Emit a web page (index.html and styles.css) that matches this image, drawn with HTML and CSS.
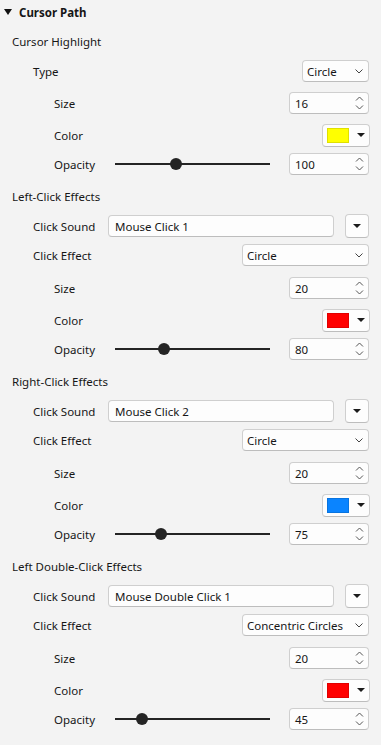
FILE: index.html
```html
<!DOCTYPE html>
<html lang="en">
<head>
  <meta charset="UTF-8">
  <meta name="viewport" content="width=device-width, initial-scale=1.0">
  <title>Cursor Path</title>
  <link rel="stylesheet" href="styles.css">
</head>
<body>
  <div class="panel">
    <div class="title">
      <svg class="caret" width="8" height="6" viewBox="0 0 8 6"><path d="M0 0h8L4 6z" fill="#111"/></svg>
      <span>Cursor Path</span>
    </div>

    <!-- Cursor highlight -->
    <div class="group first">
      <div class="group-head">Cursor Highlight</div>
      <div class="row lvl1">
        <span class="label">Type</span>
        <div class="select select-sm"><span>Circle</span><svg class="chev" width="8" height="5" viewBox="0 0 8 5"><path d="M0.5 0.5L4 4L7.5 0.5" fill="none" stroke="#444" stroke-width="1"/></svg></div>
      </div>
      <div class="row lvl2 sub">
        <span class="label">Size</span>
        <div class="spin"><span>16</span><svg class="arrows" width="9" height="16" viewBox="0 0 9 16"><path d="M1 5.5L4.5 2L8 5.5M1 10.5L4.5 14L8 10.5" fill="none" stroke="#555" stroke-width="1"/></svg></div>
      </div>
      <div class="row lvl2 sub">
        <span class="label">Color</span>
        <div class="color-btn"><span class="swatch" style="background:#ffff00"></span><span class="drop"></span></div>
      </div>
      <div class="row lvl2 opacity">
        <span class="label">Opacity</span>
        <div class="slider"><span class="thumb" style="left:39.2%"></span></div>
        <div class="spin"><span>100</span><svg class="arrows" width="9" height="16" viewBox="0 0 9 16"><path d="M1 5.5L4.5 2L8 5.5M1 10.5L4.5 14L8 10.5" fill="none" stroke="#555" stroke-width="1"/></svg></div>
      </div>
    </div>

    <div class="group">
      <div class="group-head">Left-Click Effects</div>
      <div class="row lvl1">
        <span class="label">Click Sound</span>
        <div class="text-input">Mouse Click 1</div>
        <div class="menu-btn"><span class="drop"></span></div>
      </div>
      <div class="row lvl1 tight">
        <span class="label">Click Effect</span>
        <div class="select select-lg"><span>Circle</span><svg class="chev" width="8" height="5" viewBox="0 0 8 5"><path d="M0.5 0.5L4 4L7.5 0.5" fill="none" stroke="#444" stroke-width="1"/></svg></div>
      </div>
      <div class="row lvl2 sub wide">
        <span class="label">Size</span>
        <div class="spin"><span>20</span><svg class="arrows" width="9" height="16" viewBox="0 0 9 16"><path d="M1 5.5L4.5 2L8 5.5M1 10.5L4.5 14L8 10.5" fill="none" stroke="#555" stroke-width="1"/></svg></div>
      </div>
      <div class="row lvl2 sub">
        <span class="label">Color</span>
        <div class="color-btn"><span class="swatch" style="background:#ff0000"></span><span class="drop"></span></div>
      </div>
      <div class="row lvl2 opacity">
        <span class="label">Opacity</span>
        <div class="slider"><span class="thumb" style="left:31.4%"></span></div>
        <div class="spin"><span>80</span><svg class="arrows" width="9" height="16" viewBox="0 0 9 16"><path d="M1 5.5L4.5 2L8 5.5M1 10.5L4.5 14L8 10.5" fill="none" stroke="#555" stroke-width="1"/></svg></div>
      </div>
    </div>

    <div class="group">
      <div class="group-head">Right-Click Effects</div>
      <div class="row lvl1">
        <span class="label">Click Sound</span>
        <div class="text-input">Mouse Click 2</div>
        <div class="menu-btn"><span class="drop"></span></div>
      </div>
      <div class="row lvl1 tight">
        <span class="label">Click Effect</span>
        <div class="select select-lg"><span>Circle</span><svg class="chev" width="8" height="5" viewBox="0 0 8 5"><path d="M0.5 0.5L4 4L7.5 0.5" fill="none" stroke="#444" stroke-width="1"/></svg></div>
      </div>
      <div class="row lvl2 sub wide">
        <span class="label">Size</span>
        <div class="spin"><span>20</span><svg class="arrows" width="9" height="16" viewBox="0 0 9 16"><path d="M1 5.5L4.5 2L8 5.5M1 10.5L4.5 14L8 10.5" fill="none" stroke="#555" stroke-width="1"/></svg></div>
      </div>
      <div class="row lvl2 sub">
        <span class="label">Color</span>
        <div class="color-btn"><span class="swatch" style="background:#0a84ff"></span><span class="drop"></span></div>
      </div>
      <div class="row lvl2 opacity">
        <span class="label">Opacity</span>
        <div class="slider"><span class="thumb" style="left:29.4%"></span></div>
        <div class="spin"><span>75</span><svg class="arrows" width="9" height="16" viewBox="0 0 9 16"><path d="M1 5.5L4.5 2L8 5.5M1 10.5L4.5 14L8 10.5" fill="none" stroke="#555" stroke-width="1"/></svg></div>
      </div>
    </div>

    <div class="group">
      <div class="group-head">Left Double-Click Effects</div>
      <div class="row lvl1">
        <span class="label">Click Sound</span>
        <div class="text-input">Mouse Double Click 1</div>
        <div class="menu-btn"><span class="drop"></span></div>
      </div>
      <div class="row lvl1 tight">
        <span class="label">Click Effect</span>
        <div class="select select-lg"><span>Concentric Circles</span><svg class="chev" width="8" height="5" viewBox="0 0 8 5"><path d="M0.5 0.5L4 4L7.5 0.5" fill="none" stroke="#444" stroke-width="1"/></svg></div>
      </div>
      <div class="row lvl2 sub wide">
        <span class="label">Size</span>
        <div class="spin"><span>20</span><svg class="arrows" width="9" height="16" viewBox="0 0 9 16"><path d="M1 5.5L4.5 2L8 5.5M1 10.5L4.5 14L8 10.5" fill="none" stroke="#555" stroke-width="1"/></svg></div>
      </div>
      <div class="row lvl2 sub">
        <span class="label">Color</span>
        <div class="color-btn"><span class="swatch" style="background:#ff0000"></span><span class="drop"></span></div>
      </div>
      <div class="row lvl2 opacity">
        <span class="label">Opacity</span>
        <div class="slider"><span class="thumb" style="left:17.6%"></span></div>
        <div class="spin"><span>45</span><svg class="arrows" width="9" height="16" viewBox="0 0 9 16"><path d="M1 5.5L4.5 2L8 5.5M1 10.5L4.5 14L8 10.5" fill="none" stroke="#555" stroke-width="1"/></svg></div>
      </div>
    </div>
  </div>
</body>
</html>
```

FILE: styles.css
```css
body {
  margin: 0;
  background: #f3f3f3;
  font-family: "Noto Sans", "Open Sans", sans-serif;
  font-size: 11.5px;
  color: #161616;
}
.panel {
  padding: 1px 12px 10px 12px;
}
.title {
  height: 22px;
  display: flex;
  align-items: center;
  margin-left: -8px;
  font-weight: bold;
}
.caret {
  margin-right: 7px;
}
.group {
  margin-top: 10px;
}
.group.first {
  margin-top: 7px;
}
.group-head {
  height: 22px;
  display: flex;
  align-items: center;
}
.row {
  height: 22px;
  display: flex;
  align-items: center;
  margin-top: 8px;
}
.row.tight {
  margin-top: 7px;
}
.row.sub {
  margin-top: 10px;
}
.row.sub.wide {
  margin-top: 11px;
}
.row.opacity {
  margin-top: 7px;
}
.lvl1 {
  padding-left: 21px;
}
.lvl2 {
  padding-left: 42px;
}
.label {
  flex: 1;
  white-space: nowrap;
}
.row.opacity .label {
  flex: none;
  width: 61px;
}

/* inputs */
.select, .spin, .text-input, .menu-btn, .color-btn {
  box-sizing: border-box;
  height: 22px;
  background: #fdfdfd;
  border: 1px solid #cfcfcf;
  border-bottom-color: #bdbdbd;
  border-radius: 4px;
  display: flex;
  align-items: center;
}
.select {
  padding: 0 5px 0 4px;
  justify-content: space-between;
}
.select-sm {
  width: 67px;
}
.select-lg {
  width: 127px;
}
.spin {
  width: 80px;
  padding: 0 4px 0 5px;
  justify-content: space-between;
}
.text-input {
  flex: none;
  width: 226px;
  padding-left: 6px;
}
.menu-btn {
  width: 24px;
  height: 24px;
  margin-left: 11px;
  justify-content: center;
}
.color-btn {
  width: 48px;
  height: 23px;
  margin-right: -1px;
  padding-left: 4px;
}
.swatch {
  width: 22px;
  height: 15px;
  box-shadow: inset 0 0 0 1px rgba(0, 0, 0, 0.12);
}
.color-btn .drop {
  margin-left: 8px;
}
.drop {
  width: 0;
  height: 0;
  border-left: 4px solid transparent;
  border-right: 4px solid transparent;
  border-top: 4px solid #1b1b1b;
}

/* slider */
.slider {
  position: relative;
  width: 155px;
  height: 2px;
  background: #242424;
  margin-right: 19px;
}
.thumb {
  position: absolute;
  top: -5px;
  width: 12px;
  height: 12px;
  margin-left: -6px;
  border-radius: 50%;
  background: #242424;
}
```
